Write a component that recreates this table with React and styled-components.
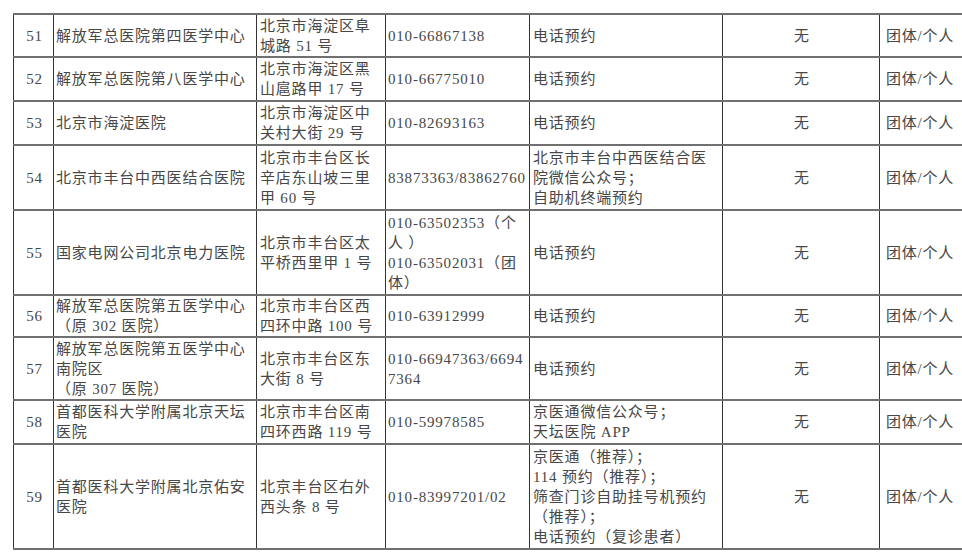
import styled, { createGlobalStyle } from "styled-components";

const GlobalStyle = createGlobalStyle`
  html, body {
    margin: 0;
    padding: 0;
    background: #ffffff;
    overflow: hidden;
  }
`;

const ROWS = [
  {
    no: 51,
    h: 43,
    name: ["解放军总医院第四医学中心"],
    addr: ["北京市海淀区阜", "城路 51 号"],
    phone: ["010-66867138"],
    way: ["电话预约"],
  },
  {
    no: 52,
    h: 44,
    name: ["解放军总医院第八医学中心"],
    addr: ["北京市海淀区黑", "山扈路甲 17 号"],
    phone: ["010-66775010"],
    way: ["电话预约"],
  },
  {
    no: 53,
    h: 44,
    name: ["北京市海淀医院"],
    addr: ["北京市海淀区中", "关村大街 29 号"],
    phone: ["010-82693163"],
    way: ["电话预约"],
  },
  {
    no: 54,
    h: 65,
    name: ["北京市丰台中西医结合医院"],
    addr: ["北京市丰台区长", "辛店东山坡三里", "甲 60 号"],
    phone: ["83873363/83862760"],
    way: ["北京市丰台中西医结合医", "院微信公众号；", "自助机终端预约"],
  },
  {
    no: 55,
    h: 85,
    name: ["国家电网公司北京电力医院"],
    addr: ["北京市丰台区太", "平桥西里甲 1 号"],
    phone: ["010-63502353（个", "人 ）", "010-63502031（团", "体）"],
    way: ["电话预约"],
  },
  {
    no: 56,
    h: 42,
    name: ["解放军总医院第五医学中心", "（原 302 医院）"],
    addr: ["北京市丰台区西", "四环中路 100 号"],
    phone: ["010-63912999"],
    way: ["电话预约"],
  },
  {
    no: 57,
    h: 63,
    name: ["解放军总医院第五医学中心", "南院区", "（原 307 医院）"],
    addr: ["北京市丰台区东", "大街 8 号"],
    phone: ["010-66947363/6694", "7364"],
    way: ["电话预约"],
  },
  {
    no: 58,
    h: 44,
    name: ["首都医科大学附属北京天坛", "医院"],
    addr: ["北京市丰台区南", "四环西路 119 号"],
    phone: ["010-59978585"],
    way: ["京医通微信公众号；", "天坛医院 APP"],
  },
  {
    no: 59,
    h: 105,
    name: ["首都医科大学附属北京佑安", "医院"],
    addr: ["北京丰台区右外", "西头条 8 号"],
    phone: ["010-83997201/02"],
    way: [
      "京医通（推荐）；",
      "114 预约（推荐）；",
      "筛查门诊自助挂号机预约",
      "（推荐）；",
      "电话预约（复诊患者）",
    ],
  },
];

const Page = styled.div`
  width: 962px;
  height: 555px;
  overflow: hidden;
  padding: 13px 0 0 13px;
  box-sizing: border-box;
  font-family: "Liberation Serif", "Noto Sans CJK SC", serif;
  font-size: 15px;
  letter-spacing: 0.8px;
  color: #474747;
`;

const Table = styled.table`
  border-collapse: collapse;
  table-layout: fixed;
  width: 1000px;
`;

const Row = styled.tr`
  height: ${(p) => p.$h}px;
`;

const Cell = styled.td`
  border-top: 2px solid #707070;
  border-bottom: 2px solid #707070;
  border-left: 1px solid #333333;
  padding: 0 0 0 ${(p) => p.$pad || 2}px;
  vertical-align: middle;
  text-align: ${(p) => (p.$center ? "center" : "left")};
  white-space: nowrap;
  line-height: 20px;
  overflow: hidden;
`;

const Line = styled.div`
  display: block;
`;

const Lines = ({ items }) =>
  items.map((t, i) => <Line key={i}>{t}</Line>);

const COLS = [40, 203, 129, 144, 193, 157, 134];

export default function App() {
  return (
    <>
      <GlobalStyle />
      <Page>
        <Table>
          <colgroup>
            {COLS.map((w, i) => (
              <col key={i} style={{ width: w }} />
            ))}
          </colgroup>
          <tbody>
            {ROWS.map((r) => (
              <Row key={r.no} $h={r.h}>
                <Cell $center $pad={0}>
                  {r.no}
                </Cell>
                <Cell>
                  <Lines items={r.name} />
                </Cell>
                <Cell $pad={3}>
                  <Lines items={r.addr} />
                </Cell>
                <Cell $pad={0}>
                  <Lines items={r.phone} />
                </Cell>
                <Cell $pad={3}>
                  <Lines items={r.way} />
                </Cell>
                <Cell $center $pad={0}>
                  无
                </Cell>
                <Cell $pad={6}>团体/个人</Cell>
              </Row>
            ))}
          </tbody>
        </Table>
      </Page>
    </>
  );
}
